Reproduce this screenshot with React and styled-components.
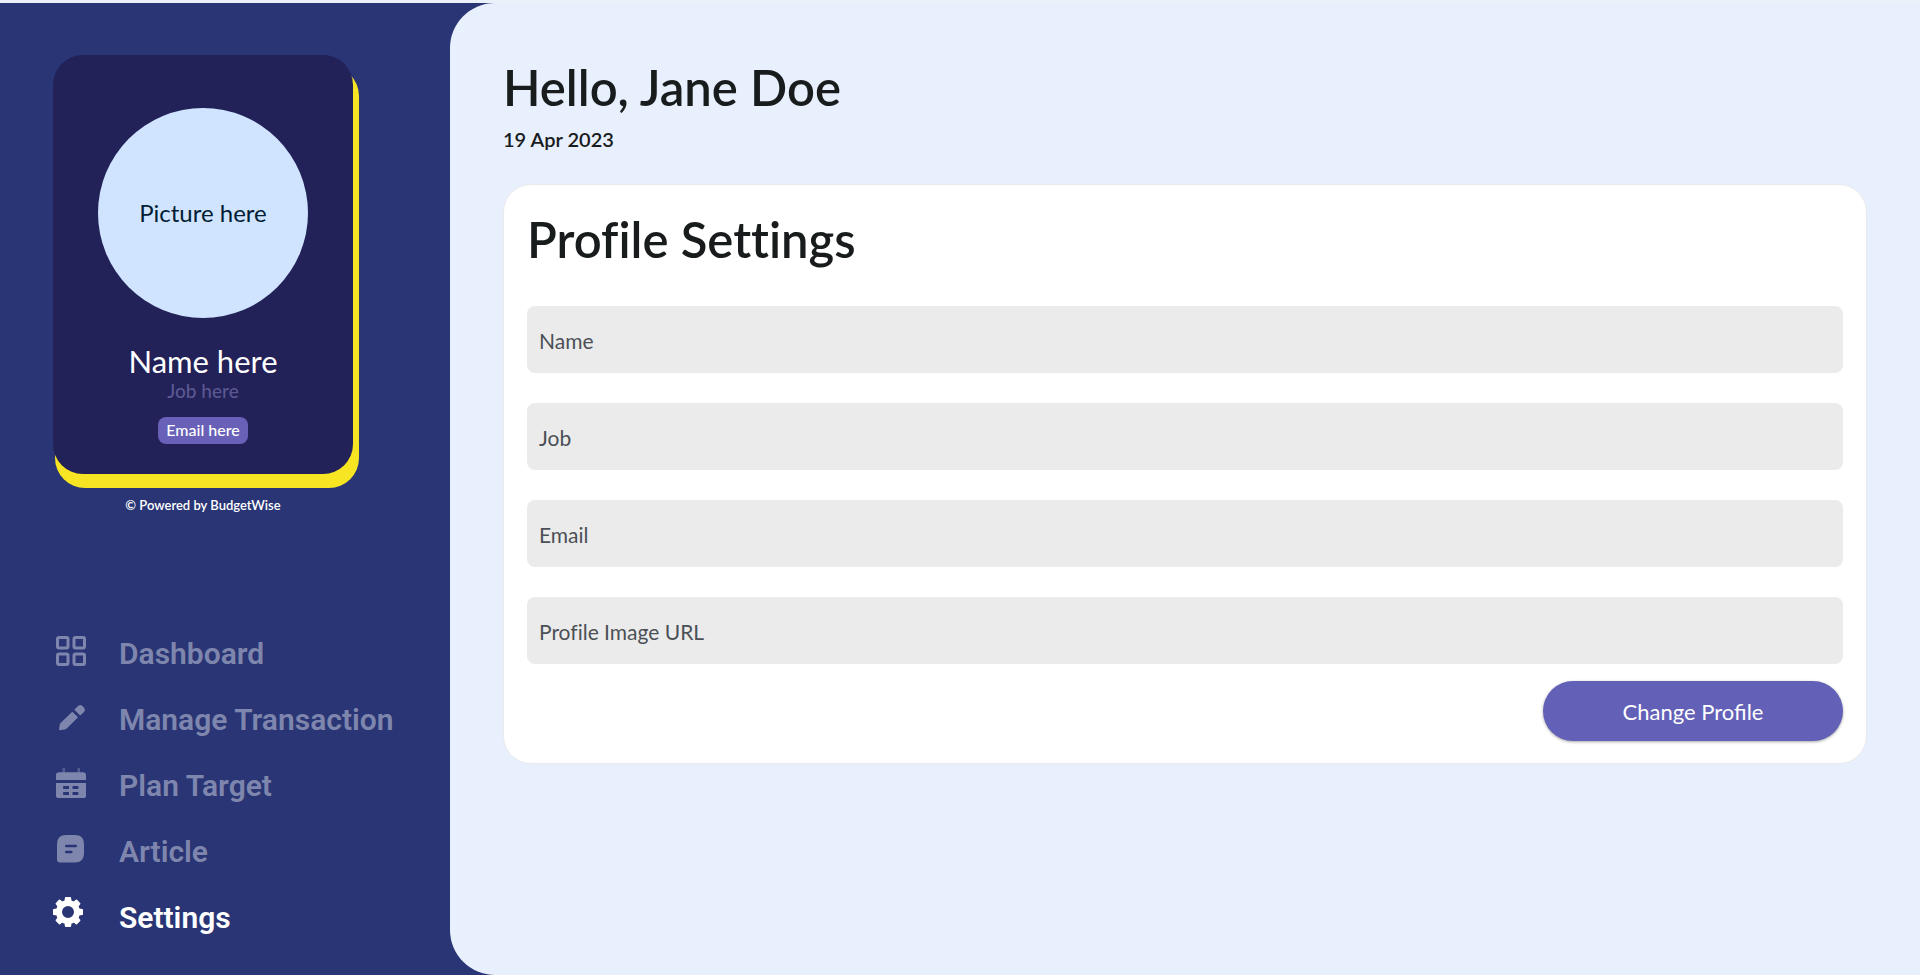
import React from "react";
import styled, { createGlobalStyle } from "styled-components";

const GlobalStyle = createGlobalStyle`
  *, *::before, *::after { box-sizing: border-box; }
  body {
    margin: 0;
    background: #293574;
    font-family: Lato, "Open Sans", sans-serif;
    font-variant-ligatures: none;
    color: #191c1d;
  }
`;

const Shell = styled.div`
  display: flex;
  min-height: 100vh;
  border-top: 3px solid #eaf1fa;
  background: #293574;
`;

const Sidebar = styled.aside`
  flex: 0 0 450px;
  padding: 52px 0 24px 53px;
`;

const ProfileColumn = styled.section`
  width: 300px;
  display: flex;
  flex-direction: column;
  gap: 21px;
`;

const ProfileCard = styled.div`
  position: relative;
  z-index: 0;
  display: flex;
  flex-direction: column;

  &::before {
    content: "";
    position: absolute;
    z-index: -1;
    inset: 11px -6px -14px 2px;
    border-radius: 30px;
    background: #f7e423;
  }
`;

const ProfileBody = styled.div`
  display: flex;
  flex-direction: column;
  align-items: center;
  padding: 53px 24px 30px;
  border-radius: 30px;
  background: #222158;
`;

const Avatar = styled.div`
  width: 210px;
  height: 210px;
  display: grid;
  place-items: center;
  border-radius: 50%;
  background: #d0e4ff;
  color: #001d34;
  font-size: 24px;
  line-height: 32px;
`;

const ProfileName = styled.div`
  margin-top: 25px;
  color: #fff;
  font-size: 31px;
  line-height: 36px;
`;

const ProfileJob = styled.div`
  color: #5a5891;
  font-size: 19px;
  font-weight: 500;
  line-height: 24px;
`;

const EmailChip = styled.div`
  height: 27px;
  margin-top: 14px;
  padding: 0 8px;
  border-radius: 8px;
  background: #6961b8;
  color: #fff;
  font-size: 16px;
  font-weight: 500;
  line-height: 26px;
`;

const Powered = styled.div`
  color: #fff;
  font-size: 13px;
  font-weight: 600;
  line-height: 20px;
  text-align: center;
`;

const Nav = styled.nav`
  margin-top: 105px;
`;

const NavLink = styled.a`
  display: flex;
  align-items: center;
  gap: 26px;
  height: 66px;
  color: ${(p) => (p.$active ? "#fff" : "#7f86ad")};
  font-family: Roboto, sans-serif;
  font-size: 30px;
  font-weight: 600;
  text-decoration: none;
  white-space: nowrap;
`;

const Icon = styled.svg`
  flex: none;
  width: 40px;
  height: 40px;
`;

const Main = styled.main`
  flex: 1;
  min-width: 0;
  padding: 54px 53px 40px;
  border-radius: 45px 0 0 45px;
  background: #e8effd;
`;

const Title = styled.h1`
  margin: 0;
  font-size: 49px;
  font-weight: 600;
  line-height: 60px;
`;

const SectionTitle = styled(Title).attrs({ as: "h2" })``;

const Today = styled.p`
  margin: 8px 0 31px;
  font-size: 20px;
  font-weight: 600;
  line-height: 28px;
`;

const Card = styled.form`
  display: flex;
  flex-direction: column;
  padding: 24px 23px 22px;
  border: 1px solid #e9eaec;
  border-radius: 28px;
  background: #fff;
`;

const Fields = styled.div`
  display: grid;
  gap: 30px;
  margin: 37px 0 17px;
`;

const Field = styled.div`
  display: grid;
  align-items: center;
  height: 67px;
  border-radius: 8px;
  background: #ebebeb;
`;

const FieldLabel = styled.label`
  grid-area: 1 / 1;
  padding: 3px 12px 0;
  color: #4b5056;
  font-size: 21px;
  line-height: 28px;
  pointer-events: none;
`;

const FieldInput = styled.input`
  grid-area: 1 / 1;
  width: 100%;
  height: 100%;
  padding: 3px 12px 0;
  border: 0;
  border-radius: 8px;
  background: transparent;
  color: #191c1d;
  font: inherit;
  font-size: 21px;

  &:focus + ${FieldLabel}, &:not(:placeholder-shown) + ${FieldLabel} {
    visibility: hidden;
  }
`;

const SubmitButton = styled.button`
  align-self: flex-end;
  width: 300px;
  height: 60px;
  border: 0;
  border-radius: 30px;
  background: #6261b7;
  box-shadow: 0 1px 3px rgba(0, 0, 0, 0.35);
  color: #fff;
  font-family: inherit;
  font-size: 22px;
  cursor: pointer;
`;

function DashboardIcon() {
  return (
    <Icon viewBox="0 0 40 40" fill="none" stroke="currentColor" strokeWidth="3" aria-hidden="true">
      <rect x="4.5" y="4.5" width="10.5" height="10.5" rx="1.5" />
      <rect x="21" y="4.5" width="10.5" height="10.5" rx="1.5" />
      <rect x="4.5" y="21" width="10.5" height="10.5" rx="1.5" />
      <rect x="21" y="21" width="10.5" height="10.5" rx="1.5" />
    </Icon>
  );
}

function PencilIcon() {
  return (
    <Icon viewBox="0 0 40 40" fill="currentColor" aria-hidden="true">
      <path d="M19.3 12.7 25 18.3 14 29.3Q13 30.3 11.8 30.5L6 31.3 6.6 25.9Q6.8 24.7 7.6 24Z" />
      <path d="M21.3 10.7 25 7Q27.3 5.2 29.4 7L31 8.6Q32.8 10.8 31 13L27.2 16.5Z" />
    </Icon>
  );
}

function CalendarIcon() {
  return (
    <Icon viewBox="0 0 40 40" fill="currentColor" aria-hidden="true">
      <path opacity="0.5" d="M9.5 3H12V8H9.5ZM24.5 3H27V8H24.5Z" />
      <path d="M3 15V10.5Q3 7.3 6.2 7.3H29.8Q33 7.3 33 10.5V15Z" />
      <path
        fillRule="evenodd"
        d="M3 18H33V31Q33 33 31 33H5Q3 33 3 31ZM11 21Q10 21 10 22V23Q10 24 11 24H16V21ZM19.5 21V24H24.5Q25.5 24 25.5 23V22Q25.5 21 24.5 21ZM11 27Q10 27 10 28V29Q10 30 11 30H16V27ZM19.5 27V30H24.5Q25.5 30 25.5 29V28Q25.5 27 24.5 27Z"
      />
    </Icon>
  );
}

function ArticleIcon() {
  return (
    <Icon viewBox="0 0 40 40" fill="currentColor" aria-hidden="true">
      <path
        fillRule="evenodd"
        d="M13 4H22Q31 4 31 13V22.5Q31 31.5 22 31.5H7Q4 31.5 4 28.5V13Q4 4 13 4ZM13.3 13.7A1.3 1.3 0 0 0 13.3 16.3H22.7A1.3 1.3 0 0 0 22.7 13.7ZM13.3 19.7A1.3 1.3 0 0 0 13.3 22.3H18.3A1.3 1.3 0 0 0 18.3 19.7Z"
      />
    </Icon>
  );
}

function GearIcon() {
  return (
    <Icon viewBox="0 0 40 40" fill="currentColor" aria-hidden="true">
      <circle cx="15" cy="15" r="9" fill="none" stroke="currentColor" strokeWidth="6" />
      {[0, 45, 90, 135, 180, 225, 270, 315].map((angle) => (
        <path
          key={angle}
          transform={`rotate(${angle} 15 15)`}
          d="M12.8 0H17.2Q18 0 18.1 0.8L18.8 6H11.2L11.9 0.8Q12 0 12.8 0Z"
        />
      ))}
    </Icon>
  );
}

const navItems = [
  { label: "Dashboard", icon: DashboardIcon },
  { label: "Manage Transaction", icon: PencilIcon },
  { label: "Plan Target", icon: CalendarIcon },
  { label: "Article", icon: ArticleIcon },
  { label: "Settings", icon: GearIcon, active: true },
];

const fields = [
  { id: "name", label: "Name", type: "text" },
  { id: "job", label: "Job", type: "text" },
  { id: "email", label: "Email", type: "email" },
  { id: "image", label: "Profile Image URL", type: "url" },
];

export default function App() {
  return (
    <>
      <GlobalStyle />
      <Shell>
        <Sidebar>
          <ProfileColumn>
            <ProfileCard>
              <ProfileBody>
                <Avatar>Picture here</Avatar>
                <ProfileName>Name here</ProfileName>
                <ProfileJob>Job here</ProfileJob>
                <EmailChip>Email here</EmailChip>
              </ProfileBody>
            </ProfileCard>
            <Powered>© Powered by BudgetWise</Powered>
          </ProfileColumn>
          <Nav>
            {navItems.map(({ label, icon: Glyph, active }) => (
              <NavLink key={label} href="#" $active={active} aria-current={active ? "page" : undefined}>
                <Glyph />
                {label}
              </NavLink>
            ))}
          </Nav>
        </Sidebar>
        <Main>
          <Title>Hello, Jane Doe</Title>
          <Today>19 Apr 2023</Today>
          <Card onSubmit={(e) => e.preventDefault()}>
            <SectionTitle>Profile Settings</SectionTitle>
            <Fields>
              {fields.map(({ id, label, type }) => (
                <Field key={id}>
                  <FieldInput id={id} type={type} placeholder=" " />
                  <FieldLabel htmlFor={id}>{label}</FieldLabel>
                </Field>
              ))}
            </Fields>
            <SubmitButton type="submit">Change Profile</SubmitButton>
          </Card>
        </Main>
      </Shell>
    </>
  );
}
